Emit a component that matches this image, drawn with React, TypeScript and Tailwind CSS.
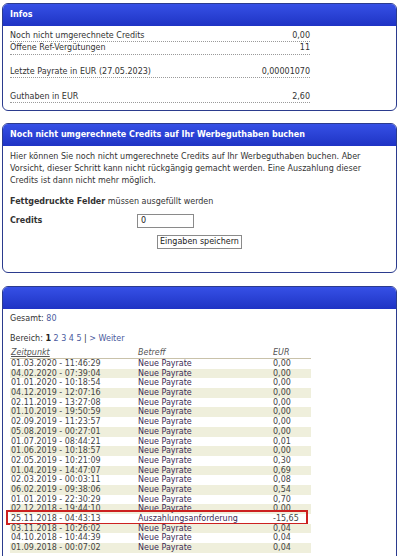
const rows: [string, string, string][] = [
  ["01.03.2020 - 11:46:29", "Neue Payrate", "0,00"],
  ["04.02.2020 - 07:39:04", "Neue Payrate", "0,00"],
  ["01.01.2020 - 10:18:54", "Neue Payrate", "0,00"],
  ["04.12.2019 - 12:07:16", "Neue Payrate", "0,00"],
  ["02.11.2019 - 13:27:08", "Neue Payrate", "0,00"],
  ["01.10.2019 - 19:50:59", "Neue Payrate", "0,00"],
  ["02.09.2019 - 11:23:57", "Neue Payrate", "0,00"],
  ["05.08.2019 - 00:27:01", "Neue Payrate", "0,00"],
  ["01.07.2019 - 08:44:21", "Neue Payrate", "0,01"],
  ["01.06.2019 - 10:18:57", "Neue Payrate", "0,00"],
  ["02.05.2019 - 10:21:09", "Neue Payrate", "0,30"],
  ["01.04.2019 - 14:47:07", "Neue Payrate", "0,69"],
  ["02.03.2019 - 00:03:11", "Neue Payrate", "0,08"],
  ["06.02.2019 - 09:38:06", "Neue Payrate", "0,54"],
  ["01.01.2019 - 22:30:29", "Neue Payrate", "0,70"],
  ["02.12.2018 - 19:44:10", "Neue Payrate", "0,00"],
  ["25.11.2018 - 04:43:13", "Auszahlungsanforderung", "-15,65"],
  ["03.11.2018 - 10:26:02", "Neue Payrate", "0,04"],
  ["04.10.2018 - 10:44:39", "Neue Payrate", "0,04"],
  ["01.09.2018 - 00:07:02", "Neue Payrate", "0,04"],
]

function Panel({ title, children, className = "" }: { title: string; children: React.ReactNode; className?: string }) {
  return (
    <div className={"w-[395px] rounded-[6px] border border-[#2b3b8e] overflow-hidden bg-white " + className}>
      <div className="h-[22px] px-[7px] flex items-center bg-gradient-to-b from-[#3650e6] to-[#1f33c4] text-white font-bold">
        {title}
      </div>
      {children}
    </div>
  )
}

function InfoRow({ label, value, className = "" }: { label: string; value: string; className?: string }) {
  return (
    <div className={"flex justify-between h-[12px] leading-[11px] border-b border-dotted border-[#9a9a9a] " + className}>
      <span>{label}</span>
      <span>{value}</span>
    </div>
  )
}

export default function App() {
  return (
    <div
      className="w-[400px] min-h-[556px] bg-white pt-[3px] pl-[2px] text-[8px] text-[#333]"
      style={{ fontFamily: '"DejaVu Sans", Verdana, sans-serif' }}
    >
      <Panel title="Infos">
        <div className="px-[7px] pt-[4px] pb-[7px]">
          <div className="w-[300px]">
            <InfoRow label="Noch nicht umgerechnete Credits" value="0,00" />
            <InfoRow label="Offene Ref-Vergütungen" value="11" className="h-[13px] leading-[12px]" />
            <InfoRow label="Letzte Payrate in EUR (27.05.2023)" value="0,00001070" className="mt-[11px]" />
            <InfoRow label="Guthaben in EUR" value="2,60" className="mt-[13px]" />
          </div>
        </div>
      </Panel>

      <Panel title="Noch nicht umgerechnete Credits auf Ihr Werbeguthaben buchen" className="mt-[12px]">
        <div className="px-[7px] pt-[5px] pb-[23px]">
          <p className="leading-[12px]">
            Hier können Sie noch nicht umgerechnete Credits auf Ihr Werbeguthaben buchen. Aber
            <br />
            Vorsicht, dieser Schritt kann nicht rückgängig gemacht werden. Eine Auszahlung dieser
            <br />
            Credits ist dann nicht mehr möglich.
          </p>
          <p className="mt-[9px] leading-[12px]">
            <span className="font-bold">Fettgedruckte Felder</span> müssen ausgefüllt werden
          </p>
          <div className="mt-[6px] flex items-center h-[14px]">
            <span className="w-[127px] font-bold">Credits</span>
            <div className="w-[57px] h-[14px] border border-[#8a8a8a] px-[3px] leading-[12px] text-[#222]">0</div>
          </div>
          <div className="mt-[7px] pl-[147px]">
            <button
              type="button"
              className="h-[14px] px-[2px] border border-[#8a8a8a] bg-white leading-[12px] text-[8px] text-[#222]"
            >
              Eingaben speichern
            </button>
          </div>
        </div>
      </Panel>

      <Panel title="" className="mt-[13px]">
        <div className="px-[7px] pt-[4px] pb-[10px]">
          <p className="leading-[12px]">
            Gesamt: <span className="text-[#4a5a9e]">80</span>
          </p>
          <p className="mt-[8px] leading-[12px]">
            Bereich: <span className="font-bold text-[#222]">1</span>{" "}
            <span className="text-[#4a5a9e]">2 3 4 5</span> | <span className="text-[#4a5a9e]">&gt; Weiter</span>
          </p>
          <div className="mt-[2px] w-[301px]">
            <div className="flex h-[12px] leading-[11px] italic text-[#555] border-b border-[#c9c2aa]">
              <span className="w-[128px] pl-[1px] underline">Zeitpunkt</span>
              <span className="w-[135px]">Betreff</span>
              <span>EUR</span>
            </div>
            {rows.map(([date, subject, amount], i) => (
              <div
                key={date}
                className={
                  "relative flex h-[9.7px] leading-[9.7px] " + (i % 2 === 1 ? "bg-[#efefdc]" : "bg-white")
                }
              >
                <span className="w-[128px] pl-[1px] text-[#444]">{date}</span>
                <span className="w-[135px] text-[#3b2b55]">{subject}</span>
                <span className="text-[#444]">{amount}</span>
                {i === 16 && (
                  <span className="absolute left-[-4px] right-[3px] top-[-4px] bottom-[-1px] border-2 border-[#cc2020]" />
                )}
              </div>
            ))}
          </div>
        </div>
      </Panel>
    </div>
  )
}
